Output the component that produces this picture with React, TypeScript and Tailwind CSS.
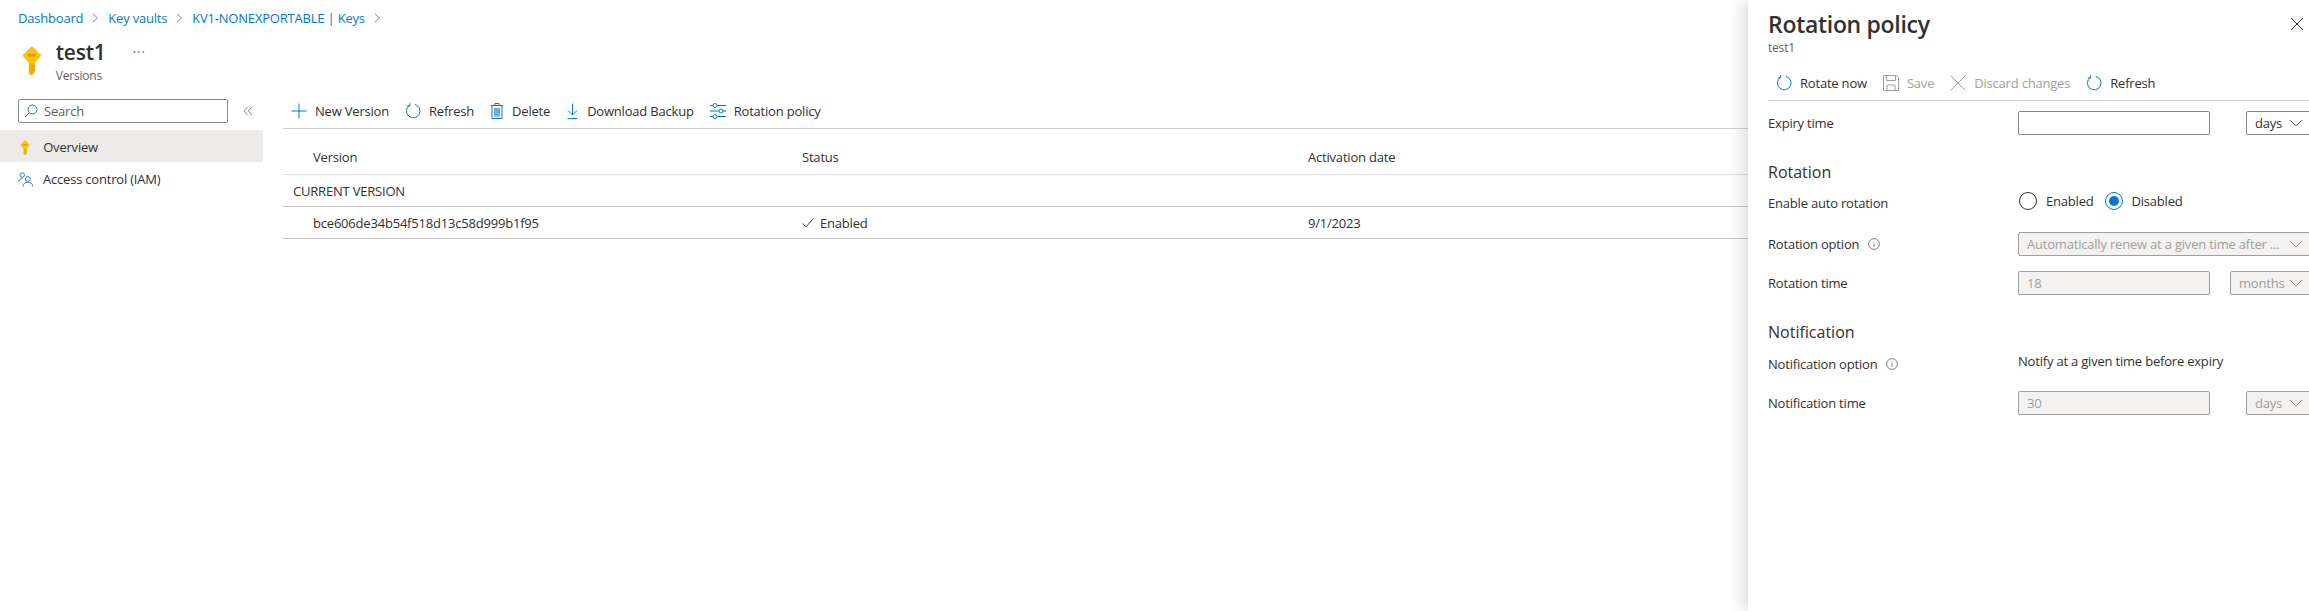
import React from 'react';

const Refresh = () => (
  <svg width="16" height="16" viewBox="0 0 16 16" fill="none" stroke="#0078d4" strokeWidth="1" className="shrink-0">
    <path d="M4.400 2.400A6.800 6.800 0 1 0 9.800 1.400" />
    <path d="M4.700 .2v2.700H1.900" />
  </svg>
);

const Key = ({ size }: { size: number }) => (
  <svg width={size * 0.68} height={size} viewBox="0 0 19 29" className="shrink-0">
    <path d="M6.500 15h6v11l-2.500 3h-2l-1.500-2z" fill="#f2b100" />
    <path d="M9.500 0 19 9.500 12.500 17h-6L0 9.500z" fill="#ffc20a" />
    <path d="M5.500 8h8v2.500h-8z" fill="#d99a00" />
    <path d="M10.500 19h2v1.500h-2zM10.500 22.500h2V24h-2z" fill="#d99a00" />
  </svg>
);

const Chevron = ({ color = '#605e5c' }: { color?: string }) => (
  <svg width="14" height="8" viewBox="0 0 14 8" fill="none" stroke={color} strokeWidth="1" className="shrink-0">
    <path d="M1 1l6 6 6-6" />
  </svg>
);

const Info = () => (
  <svg width="12" height="12" viewBox="0 0 12 12" fill="none" stroke="#605e5c" strokeWidth="0.8" className="shrink-0">
    <circle cx="6" cy="6" r="5.400" />
    <path d="M6 5.200v3.600M6 3.200v1" />
  </svg>
);

const Crumb = ({ label }: { label: string }) => (
  <>
    <span className="text-[#0078d4]">{label}</span>
    <svg width="7" height="10" viewBox="0 0 7 10" fill="none" stroke="#8a8886" strokeWidth="1" className="mx-[9px]">
      <path d="M1 1l4.500 4L1 9" />
    </svg>
  </>
);

const ToolButton = ({ icon, label, className }: { icon: React.ReactNode; label: string; className?: string }) => (
  <div className={`flex items-center gap-[8px] ${className ?? ''}`}>
    {icon}
    <span>{label}</span>
  </div>
);

const FormRow = ({ label, info, children, className }: { label: string; info?: boolean; children: React.ReactNode; className?: string }) => (
  <div className={`flex items-center ${className ?? ''}`}>
    <div className="w-[250px] flex items-center gap-[9px] shrink-0">
      <span>{label}</span>
      {info && <Info />}
    </div>
    {children}
  </div>
);

const TextBox = ({ value, disabled }: { value?: string; disabled?: boolean }) => (
  <div className={`w-[192px] h-[24px] rounded-[2px] border px-[8px] flex items-center shrink-0 ${disabled ? 'bg-[#f3f2f1] border-[#a19f9d] text-[#a19f9d]' : 'bg-white border-[#8a8886]'}`}>
    {value}
  </div>
);

const Select = ({ value, disabled, className }: { value: string; disabled?: boolean; className?: string }) => (
  <div className={`h-[24px] rounded-[2px] border pl-[8px] pr-[9px] flex items-center justify-between shrink-0 ${disabled ? 'bg-[#f3f2f1] border-[#a19f9d] text-[#a19f9d]' : 'bg-white border-[#8a8886]'} ${className ?? ''}`}>
    <span>{value}</span>
    <Chevron color={disabled ? '#8a8886' : '#605e5c'} />
  </div>
);

export default function App() {
  return (
    <div className="w-[2309px] h-[611px] overflow-hidden flex bg-white text-[#323130] text-[13px] leading-[18px] tracking-[-0.2px] font-['Open_Sans',sans-serif]">
      <div className="flex-1 min-w-0 flex flex-col">
        <div className="h-[36px] pl-[18px] flex items-center self-start">
          <Crumb label="Dashboard" />
          <Crumb label="Key vaults" />
          <Crumb label="KV1-NONEXPORTABLE | Keys" />
        </div>
        <div className="h-[57px] pl-[22px] pt-[3px] flex items-start">
          <div className="mt-[7px]">
            <Key size={29} />
          </div>
          <div className="ml-[14px]">
            <div className="text-[21px] leading-[26px] font-semibold tracking-[-0.2px]">test1</div>
            <div className="text-[12px] leading-[16px] mt-[3px] text-[#605e5c]">Versions</div>
          </div>
          <span className="ml-[27px] mt-[4px] text-[#605e5c] tracking-[1px]">···</span>
        </div>
        <div className="flex flex-1">
          <div className="w-[263px] shrink-0 pt-[6px]">
            <div className="flex items-center pl-[18px] h-[23px]">
              <div className="w-[210px] h-[24px] border border-[#8a8886] rounded-[2px] flex items-center pl-[5px] gap-[6px] text-[#605e5c]">
                <svg width="14" height="14" viewBox="0 0 14 14" fill="none" stroke="#0078d4" strokeWidth="1">
                  <circle cx="8.500" cy="5.500" r="4.500" />
                  <path d="M5.200 8.800 1 13" />
                </svg>
                <span>Search</span>
              </div>
              <svg width="10" height="10" viewBox="0 0 10 10" fill="none" stroke="#8a8886" strokeWidth="1" className="ml-[15px]">
                <path d="M4.500 1 .8 5l3.700 4M9 1 5.300 5 9 9" />
              </svg>
            </div>
            <div className="mt-[8px] h-[32px] pt-[2px] bg-[#edebe9] flex items-center pl-[20px] gap-[13px]">
              <Key size={15} />
              <span>Overview</span>
            </div>
            <div className="h-[32px] pt-[2px] flex items-center pl-[18px] gap-[10px]">
              <svg width="15" height="15" viewBox="0 0 16 16" fill="none" stroke="#2b6fd6" strokeWidth="1" className="shrink-0">
                <circle cx="4.500" cy="3.200" r="2.400" />
                <circle cx="10.500" cy="7.500" r="2.600" />
                <path d="M.8 10.500C1 7.800 3 6.800 5 7M5.300 15.500c.2-3 2.300-4.500 5.200-4.500s5 1.500 5.200 4.500" />
              </svg>
              <span>Access control (IAM)</span>
            </div>
          </div>
          <div className="flex-1 min-w-0 pl-[20px]">
            <div className="h-[36px] flex items-center border-b border-[#d2d0ce] pl-[8px] gap-[16px]">
              <ToolButton
                label="New Version"
                icon={
                  <svg width="16" height="16" viewBox="0 0 16 16" fill="none" stroke="#0078d4" strokeWidth="1">
                    <path d="M8 .5v15M.5 8h15" />
                  </svg>
                }
              />
              <ToolButton label="Refresh" icon={<Refresh />} />
              <ToolButton
                label="Delete"
                icon={
                  <svg width="14" height="16" viewBox="0 0 14 16" fill="none" stroke="#0078d4" strokeWidth="1">
                    <path d="M1 2.500h12M5 2.500V.5h4v2M2 2.500v13h10v-13" />
                    <path d="M4 5h6v8.500H4z" fill="#0078d4" fillOpacity=".6" stroke="none" />
                  </svg>
                }
              />
              <ToolButton
                label="Download Backup"
                icon={
                  <svg width="13" height="16" viewBox="0 0 13 16" fill="none" stroke="#0078d4" strokeWidth="1">
                    <path d="M6.500 .5v11M2 7.500 6.500 12 11 7.500M1.500 15.500h10" />
                  </svg>
                }
              />
              <ToolButton
                label="Rotation policy"
                icon={
                  <svg width="16" height="16" viewBox="0 0 16 16" fill="none" stroke="#0078d4" strokeWidth="1">
                    <path d="M0 2.500h3M7 2.500h9M0 8h9M13 8h3M0 13.500h3M7 13.500h9" />
                    <circle cx="5" cy="2.500" r="2" />
                    <circle cx="11" cy="8" r="2" />
                    <circle cx="5" cy="13.500" r="2" />
                  </svg>
                }
              />
            </div>
            <div className="h-[46px] pt-[10px] border-b border-[#e1dfdd] flex items-center font-medium">
              <div className="w-[519px] pl-[30px]">Version</div>
              <div className="w-[506px]">Status</div>
              <div>Activation date</div>
            </div>
            <div className="h-[32px] pt-[1px] pl-[10px] border-b border-[#c8c6c4] flex items-center font-medium">CURRENT VERSION</div>
            <div className="h-[32px] border-b border-[#c8c6c4] flex items-center">
              <div className="w-[519px] pl-[30px]">bce606de34b54f518d13c58d999b1f95</div>
              <div className="w-[506px] flex items-center gap-[6px]">
                <svg width="12" height="10" viewBox="0 0 12 10" fill="none" stroke="#323130" strokeWidth="1">
                  <path d="M.8 5.500 4 8.800 11.200.8" />
                </svg>
                <span>Enabled</span>
              </div>
              <div>9/1/2023</div>
            </div>
          </div>
        </div>
      </div>

      <div className="w-[561px] shrink-0 pl-[20px] bg-white shadow-[-6px_0_14px_rgba(0,0,0,0.13)]">
        <div className="h-[40px] pt-[8px] flex items-start justify-between">
          <div className="text-[23px] leading-[32px] font-semibold tracking-[-0.3px]">Rotation policy</div>
          <svg width="14" height="14" viewBox="0 0 14 14" fill="none" stroke="#323130" strokeWidth="1" className="mr-[5px] mt-[9px]">
            <path d="M1 1l12 12M13 1 1 13" />
          </svg>
        </div>
        <div className="text-[12px] leading-[16px] text-[#605e5c]">test1</div>
        <div className="h-[35px] mt-[10px] border-b border-[#d2d0ce] flex items-center pl-[8px] gap-[16px]">
          <ToolButton label="Rotate now" icon={<Refresh />} />
          <ToolButton
            label="Save"
            className="text-[#a19f9d]"
            icon={
              <svg width="16" height="16" viewBox="0 0 16 16" fill="none" stroke="#a19f9d" strokeWidth="1">
                <path d="M.5.5h13l2 2v13H.5zM3.500.5v5h9v-5M4 15.500V10h8v5.500" />
              </svg>
            }
          />
          <ToolButton
            label="Discard changes"
            className="text-[#a19f9d]"
            icon={
              <svg width="16" height="16" viewBox="0 0 16 16" fill="none" stroke="#a19f9d" strokeWidth="1">
                <path d="M.5.5l15 15M15.500.5l-15 15" />
              </svg>
            }
          />
          <ToolButton label="Refresh" icon={<Refresh />} />
        </div>
        <FormRow label="Expiry time" className="mt-[10px]">
          <TextBox />
          <Select value="days" className="ml-[36px] w-[67px]" />
        </FormRow>
        <div className="text-[16px] leading-[22px] mt-[26px] tracking-normal">Rotation</div>
        <FormRow label="Enable auto rotation" className="mt-[8px] h-[24px]">
          <div className="flex items-center mb-[5px] ml-[1px]">
            <div className="w-[18px] h-[18px] rounded-full border border-[#323130]" />
            <span className="ml-[9px]">Enabled</span>
            <div className="ml-[11px] w-[18px] h-[18px] rounded-full border border-[#0078d4] flex items-center justify-center">
              <div className="w-[10px] h-[10px] rounded-full bg-[#0078d4]" />
            </div>
            <span className="ml-[9px]">Disabled</span>
          </div>
        </FormRow>
        <FormRow label="Rotation option" info className="mt-[17px]">
          <Select disabled value="Automatically renew at a given time after ..." className="w-[295px]" />
        </FormRow>
        <FormRow label="Rotation time" className="mt-[15px]">
          <TextBox disabled value="18" />
          <Select disabled value="months" className="ml-[20px] w-[83px]" />
        </FormRow>
        <div className="text-[16px] leading-[22px] mt-[26px] tracking-normal">Notification</div>
        <FormRow label="Notification option" info className="mt-[9px] h-[24px]">
          <span className="mb-[6px]">Notify at a given time before expiry</span>
        </FormRow>
        <FormRow label="Notification time" className="mt-[15px]">
          <TextBox disabled value="30" />
          <Select disabled value="days" className="ml-[36px] w-[67px]" />
        </FormRow>
      </div>
    </div>
  );
}
